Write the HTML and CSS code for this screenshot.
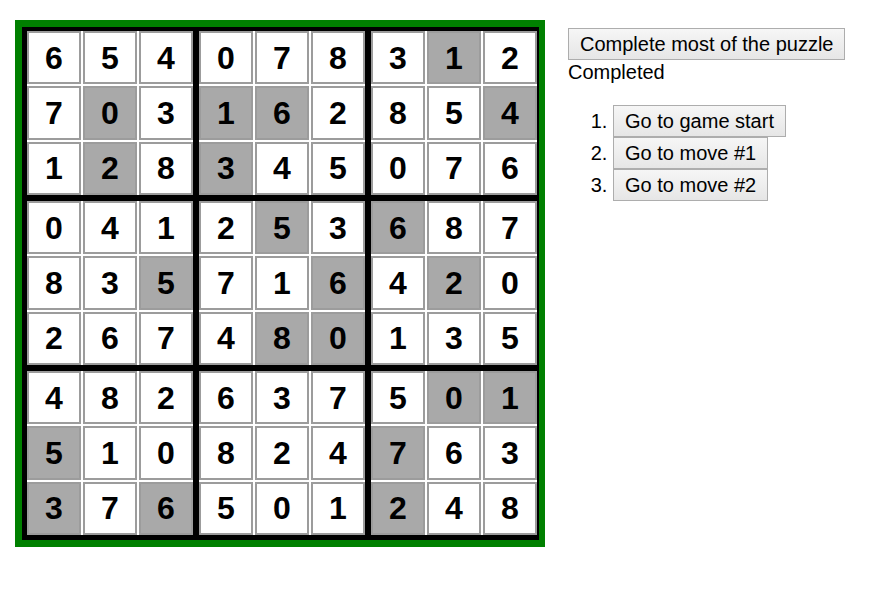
FILE: index.html
```html
<!DOCTYPE html>
<html>
<head>
<meta charset="utf-8">
<link rel="stylesheet" href="styles.css">
</head>
<body>
<div class="page">
  <div class="frame">
    <div class="board">
      <div class="block">
        <div class="cell">6</div><div class="cell">5</div><div class="cell">4</div>
        <div class="cell">7</div><div class="cell given">0</div><div class="cell">3</div>
        <div class="cell">1</div><div class="cell given">2</div><div class="cell">8</div>
      </div>
      <div class="block">
        <div class="cell">0</div><div class="cell">7</div><div class="cell">8</div>
        <div class="cell given">1</div><div class="cell given">6</div><div class="cell">2</div>
        <div class="cell given">3</div><div class="cell">4</div><div class="cell">5</div>
      </div>
      <div class="block">
        <div class="cell">3</div><div class="cell given">1</div><div class="cell">2</div>
        <div class="cell">8</div><div class="cell">5</div><div class="cell given">4</div>
        <div class="cell">0</div><div class="cell">7</div><div class="cell">6</div>
      </div>
      <div class="block">
        <div class="cell">0</div><div class="cell">4</div><div class="cell">1</div>
        <div class="cell">8</div><div class="cell">3</div><div class="cell given">5</div>
        <div class="cell">2</div><div class="cell">6</div><div class="cell">7</div>
      </div>
      <div class="block">
        <div class="cell">2</div><div class="cell given">5</div><div class="cell">3</div>
        <div class="cell">7</div><div class="cell">1</div><div class="cell given">6</div>
        <div class="cell">4</div><div class="cell given">8</div><div class="cell given">0</div>
      </div>
      <div class="block">
        <div class="cell given">6</div><div class="cell">8</div><div class="cell">7</div>
        <div class="cell">4</div><div class="cell given">2</div><div class="cell">0</div>
        <div class="cell">1</div><div class="cell">3</div><div class="cell">5</div>
      </div>
      <div class="block">
        <div class="cell">4</div><div class="cell">8</div><div class="cell">2</div>
        <div class="cell given">5</div><div class="cell">1</div><div class="cell">0</div>
        <div class="cell given">3</div><div class="cell">7</div><div class="cell given">6</div>
      </div>
      <div class="block">
        <div class="cell">6</div><div class="cell">3</div><div class="cell">7</div>
        <div class="cell">8</div><div class="cell">2</div><div class="cell">4</div>
        <div class="cell">5</div><div class="cell">0</div><div class="cell">1</div>
      </div>
      <div class="block">
        <div class="cell">5</div><div class="cell given">0</div><div class="cell given">1</div>
        <div class="cell given">7</div><div class="cell">6</div><div class="cell">3</div>
        <div class="cell given">2</div><div class="cell">4</div><div class="cell">8</div>
      </div>
    </div>
  </div>
  <div class="panel">
    <button class="btn">Complete most of the puzzle</button>
    <div class="status">Completed</div>
    <ol class="moves">
      <li><button class="btn">Go to game start</button></li>
      <li><button class="btn">Go to move #1</button></li>
      <li><button class="btn">Go to move #2</button></li>
    </ol>
  </div>
</div>
</body>
</html>
```

FILE: styles.css
```css
html, body {
  margin: 0;
  padding: 0;
  background: #ffffff;
}
body {
  margin: 8px;
  font-family: "Liberation Sans", Arial, sans-serif;
  font-size: 20px;
  color: #000;
}
.page {
  display: flex;
  align-items: flex-start;
}
.frame {
  margin: 12px 0 0 7px;
  border-style: solid;
  border-color: #008000;
  border-width: 7px 6px 7px 7px;
  background: #000;
  padding: 4px 2px 5px 5px;
}
.board {
  display: grid;
  grid-template-columns: repeat(3, 166px);
  grid-template-rows: repeat(3, 164px);
  gap: 6px;
  background: #000;
}
.block {
  display: grid;
  grid-template-columns: repeat(3, 54px);
  grid-template-rows: repeat(3, 1fr);
  gap: 2px;
  background: #fff;
}
.cell {
  box-sizing: border-box;
  border: 2px solid #9c9c9c;
  background: #fff;
  display: flex;
  align-items: center;
  justify-content: center;
  font-weight: bold;
  font-size: 32px;
  line-height: 1;
}
.cell.given {
  background: #a9a9a9;
}
.panel {
  margin: 20px 0 0 23px;
}
.btn {
  font-family: "Liberation Sans", Arial, sans-serif;
  font-size: 20px;
  color: #000;
  line-height: 24px;
  padding: 3px 11px;
  border: 1px solid #adadad;
  border-radius: 0;
  background: linear-gradient(#f6f6f6, #e6e6e6);
  margin: 0;
  display: block;
}
.status {
  line-height: 24px;
}
.moves {
  margin: 21px 0 0 0;
  padding-left: 45px;
}
.moves li {
  line-height: 32px;
}
```
